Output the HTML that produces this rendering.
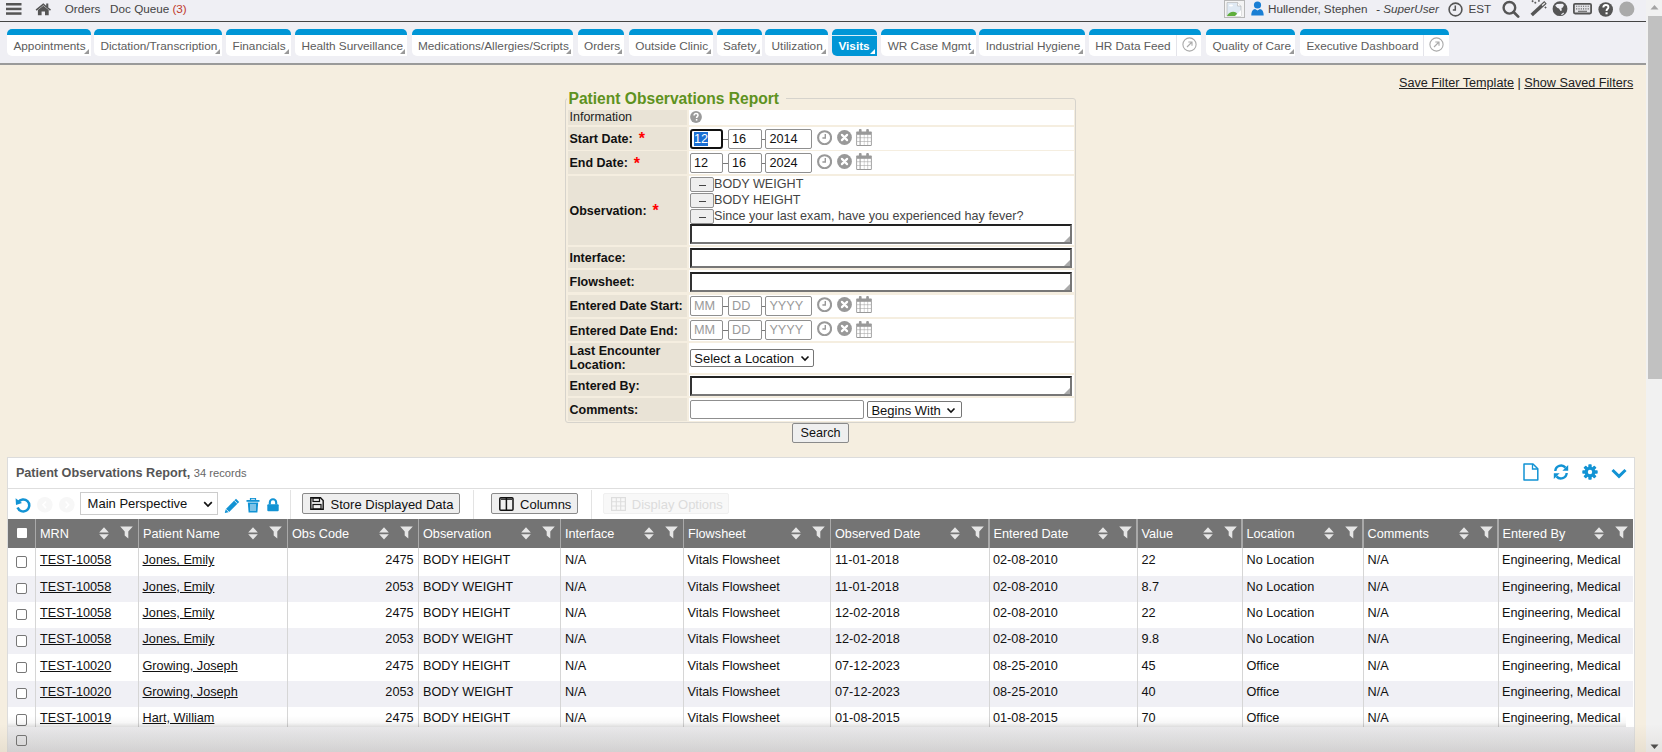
<!DOCTYPE html>
<html><head><meta charset="utf-8">
<style>
*{box-sizing:border-box;margin:0;padding:0}
html,body{width:1662px;height:752px;overflow:hidden}
body{position:relative;background:#f5eee0;font-family:"Liberation Sans",sans-serif;color:#222}
.abs{position:absolute}
#topbar{left:0;top:0;width:1646px;height:22px;background:#efeff4;border-bottom:1.4px solid #444}
#tabbar{left:0;top:22px;width:1646px;height:43px;background:#efeff4;border-bottom:2px solid #9a9a9a}
.tnav{font-size:11.7px;color:#444;top:1.9px;white-space:nowrap}
.tab{position:absolute;top:6.7px;height:27.6px;background:#fff;border-top:6px solid #0096d6;border-radius:5px 5px 0 5px;font-size:11.8px;color:#5c5c5c;white-space:nowrap;padding-left:6.4px;line-height:15px;padding-top:4.3px}
.tab .tri{position:absolute;width:0;height:0;border-left:5px solid transparent;border-bottom:5px solid #999;}
.tab.sel{background:#0096d6;color:#fff;font-weight:bold}
.tab .ext{position:absolute;top:0;right:0;bottom:0;border-left:1px solid #e4e4ea}
#sb{left:1646px;top:0;width:16px;height:752px;background:#f1f1f1}
#sbthumb{left:1648px;top:16px;width:14px;height:362.7px;background:#c1c1c1}

#fs{left:565px;top:98px;width:511px;height:325px;border:1px solid #d6d3cc;border-radius:3px}
#legend{left:566.5px;top:90px;padding:0 7px 0 2px;background:#f5eee0;font-size:15.6px;font-weight:bold;color:#5e9220;white-space:nowrap;line-height:18px}
.lc{position:absolute;left:568px;width:119px;background:#e9e3d6;font-size:12.5px;font-weight:bold;color:#111;white-space:nowrap}
.vc{position:absolute;left:689px;width:385px;background:#fff}
.lbl{position:absolute;left:1.5px;line-height:14px;margin-top:0.6px}
.req{color:#f00;margin-left:6px;font-size:16px;position:relative;top:1.5px}
.inp{position:absolute;background:#fff;border:1px solid #8f8f8f;border-radius:2px;font-size:12.7px;color:#111;line-height:15px;padding-left:3px;white-space:nowrap}
.ph{color:#9a9a9a}
.dash{position:absolute;height:1px;width:5px;background:#777}
.ta{position:absolute;left:690px;width:382px;height:20px;background:#fff;border-top:2px solid #222;border-left:2px solid #333;border-right:2px solid #777;border-bottom:2px solid #777}
.ta .grip{position:absolute;right:0;bottom:0;width:0;height:0;border-left:6px solid transparent;border-bottom:6px solid #aaa}
.minus{position:absolute;left:690px;width:23.5px;height:14.3px;background:#efefef;border:1px solid #8f8f8f;border-radius:2px}
.minus:after{content:"";position:absolute;left:7.5px;top:7px;width:7px;height:1px;background:#444}
.obs{position:absolute;left:714px;font-size:12.6px;color:#444;white-space:nowrap;line-height:14px}
.dd{position:absolute;background:#fff;border:1px solid #767676;border-radius:2px;font-size:13px;color:#111;white-space:nowrap;line-height:15px;padding-left:3px}
.dd svg{position:absolute;top:5px}
.btn{position:absolute;background:#efefef;border:1px solid #8a8a8a;border-radius:2px;font-size:12.6px;color:#111;text-align:center;line-height:18px}

#panel{left:7px;top:457px;width:1628px;height:300px;background:#fff;border:1px solid #dcdcdc}
#ptitle{left:15.9px;top:465.5px;font-size:12.66px;font-weight:bold;color:#555;white-space:nowrap;line-height:14px}
#ptitle span{font-weight:normal;font-size:11.15px;color:#666}
#pline{left:8px;top:487.6px;width:1626px;height:1px;background:#dedede}
.vsep{position:absolute;width:1px;background:#e3e3e3}
.tbtn{position:absolute;top:493.4px;height:20.2px;background:#efefef;border:1px solid #8a8a8a;border-radius:2px;font-size:13px;color:#111;white-space:nowrap;line-height:17px;padding-top:1.8px}
#ghead{left:8px;top:519px;width:1625px;height:29px;background:#747474}
.hc{position:absolute;top:519px;height:29px;color:#fff;font-size:12.7px;white-space:nowrap;line-height:14px;padding-top:7.8px}
.hsep{position:absolute;top:519px;height:29px;width:1.5px;background:#a9a9a9}
.bsep{position:absolute;top:548px;height:179px;width:1px;background:#d6d6d6}
.row{position:absolute;left:8px;width:1625px;height:26.4px}
.alt{background:#f0f0f5}
.c{position:absolute;font-size:12.7px;color:#111;white-space:nowrap;line-height:14px}
.u{text-decoration:underline}
.cb{position:absolute;left:16.3px;width:11.2px;height:11.4px;border:1px solid #777;border-radius:2px;background:#fff}
#footer{left:8px;top:727.3px;width:1626px;height:25px;background:linear-gradient(#e9e9eb,#dedee1)}
#shadow{left:8px;top:716px;width:1618px;height:11.3px;background:linear-gradient(rgba(0,0,0,0),rgba(0,0,0,0.03) 60%,rgba(0,0,0,0.13))}
</style></head><body>

<div id="topbar" class="abs">
<svg class="abs" style="left:6px;top:2.6px" width="16" height="13" viewBox="0 0 16 13"><rect x="0" y="0" width="15.5" height="2.5" fill="#555"/><rect x="0" y="4.7" width="15.5" height="2.5" fill="#555"/><rect x="0" y="9.3" width="15.5" height="2.5" fill="#555"/></svg>
<svg class="abs" style="left:35px;top:1.6px" width="17" height="14" viewBox="0 0 17 14"><path d="M8.3 1.2 L0.6 7.6 L1.6 8.8 L8.3 3.3 L15 8.8 L16 7.6 L13.3 5.4 V1.5 H11.2 V3.7Z" fill="#555"/><path d="M2.9 8.1 L8.3 3.8 L13.7 8.1 V13.2 H10 V9.6 H6.6 V13.2 H2.9Z" fill="#555"/></svg>
<span class="abs tnav" style="left:64.7px">Orders</span>
<span class="abs tnav" style="left:110.1px">Doc Queue <span style="color:#c0392b">(3)</span></span>
<svg class="abs" style="left:1224px;top:0px" width="21" height="18" viewBox="0 0 21 18"><rect x="0.5" y="0.5" width="20" height="17" fill="#f4f4f4" stroke="#b8b8b8"/><path d="M3 2.5 H13.5 L17 6 V16 H3Z" fill="#dfe9f3" stroke="#b0b0b0" stroke-width="0.6"/><path d="M13.5 2.5 V6 H17" fill="#fff" stroke="#b0b0b0" stroke-width="0.6"/><path d="M3 16 C5 12 9 11 12 12.5 L15 16Z" fill="#5fae3c"/><path d="M11 16 L17 10 V16Z" fill="#fff"/><ellipse cx="7" cy="5.5" rx="2" ry="1" fill="#fff"/></svg>
<svg class="abs" style="left:1250.5px;top:1px" width="13" height="15" viewBox="0 0 13 15"><circle cx="6.5" cy="4" r="3.6" fill="#1a7fd4"/><path d="M0.3 14.6 C0.3 9.5 2.5 8.3 4 8 L6.5 9.5 L9 8 C10.5 8.3 12.7 9.5 12.7 14.6Z" fill="#1a7fd4"/></svg>
<span class="abs tnav" style="left:1268px">Hullender, Stephen</span>
<span class="abs tnav" style="left:1376px;font-style:italic">- SuperUser</span>
<svg class="abs" style="left:1448px;top:1.5px" width="15" height="15" viewBox="0 0 15 15"><circle cx="7.5" cy="7.5" r="6.4" fill="none" stroke="#555" stroke-width="1.6"/><path d="M7.3 3.5 V8 H4.8" fill="none" stroke="#555" stroke-width="1.5"/></svg>
<span class="abs tnav" style="left:1468.5px">EST</span>
<svg class="abs" style="left:1500px;top:0px" width="20" height="19" viewBox="0 0 20 19"><circle cx="9.4" cy="7.8" r="5.8" fill="none" stroke="#555" stroke-width="2.4"/><path d="M13.6 12 L18.2 16.6" stroke="#555" stroke-width="2.7" stroke-linecap="round"/></svg>
<svg class="abs" style="left:1530px;top:0px" width="18" height="18" viewBox="0 0 18 18"><path d="M0.49 13.67 L2.91 16.33 L16.71 3.73 L14.29 1.07Z" fill="#555"/><path d="M11.65 5.11 L12.45 5.99 L15.21 3.47 L14.41 2.59Z" fill="#eee"/><path d="M2.6 0.2 V2.2 M1.6 1.2 H3.6 M8.9 0 V1.8 M8 0.9 H9.8 M5.3 1.7 V3.7 M4.3 2.7 H6.3 M15.5 6.5 V8.5 M14.5 7.5 H16.5" stroke="#555" stroke-width="0.9"/></svg>
<svg class="abs" style="left:1552px;top:1px" width="16" height="16" viewBox="0 0 16 16"><circle cx="8" cy="7.7" r="7.4" fill="#555"/><path d="M3.2 4.5 L5 3 L10.5 2.8 L12 4 L10.8 6.5 L9.5 7 L9.8 9.5 L8.5 10 L7 7.5 L5.5 7 L4 5.5Z" fill="#efeff4"/><path d="M8.8 13.5 L11.5 11.5 L12 12.8 L10 14Z" fill="#efeff4"/></svg>
<svg class="abs" style="left:1573px;top:3.4px" width="20" height="12" viewBox="0 0 20 12"><rect x="0.9" y="0.9" width="17.2" height="9.6" rx="1.2" fill="#e4e4e8" stroke="#555" stroke-width="1.8"/><path d="M3.2 3.3 H16 M3.2 5.9 H16" stroke="#555" stroke-width="1.1" stroke-dasharray="1 1.3"/><path d="M5 8.3 H14" stroke="#666" stroke-width="1.1"/></svg>
<svg class="abs" style="left:1597.5px;top:1.5px" width="16" height="15" viewBox="0 0 16 15"><circle cx="7.7" cy="7.5" r="7.3" fill="#555"/><path d="M5.3 5.6 C5.3 3.8 6.4 3 7.8 3 C9.4 3 10.4 4 10.4 5.3 C10.4 6.8 8.6 7.2 8.6 8.5 V9" fill="none" stroke="#fff" stroke-width="1.9"/><rect x="7.5" y="10.3" width="2.1" height="2" fill="#fff"/></svg>
<svg class="abs" style="left:1618.5px;top:1px" width="16" height="16" viewBox="0 0 16 16"><circle cx="7.8" cy="8" r="7.6" fill="#aaa"/></svg>
</div>
<div id="tabbar" class="abs">
<div class="tab" style="left:7.0px;width:83.7px">Appointments<span class="tri" style="right:1.8px;bottom:2.4px"></span></div>
<div class="tab" style="left:94.0px;width:127.8px">Dictation/Transcription<span class="tri" style="right:1.8px;bottom:2.4px"></span></div>
<div class="tab" style="left:226.1px;width:64.6px">Financials<span class="tri" style="right:1.8px;bottom:2.4px"></span></div>
<div class="tab" style="left:295.0px;width:111.9px">Health Surveillance<span class="tri" style="right:1.8px;bottom:2.4px"></span></div>
<div class="tab" style="left:411.6px;width:161.4px">Medications/Allergies/Scripts<span class="tri" style="right:1.8px;bottom:2.4px"></span></div>
<div class="tab" style="left:577.6px;width:46.7px">Orders<span class="tri" style="right:1.8px;bottom:2.4px"></span></div>
<div class="tab" style="left:628.9px;width:83.9px">Outside Clinic<span class="tri" style="right:1.8px;bottom:2.4px"></span></div>
<div class="tab" style="left:716.5px;width:45.3px">Safety<span class="tri" style="right:1.8px;bottom:2.4px"></span></div>
<div class="tab" style="left:765.2px;width:62.5px">Utilization<span class="tri" style="right:1.8px;bottom:2.4px"></span></div>
<div class="tab sel" style="left:832.0px;width:44.6px"><span style="position:absolute;left:0;right:0;top:0.3px;height:1px;background:#d8eef9"></span>Visits<span class="tri" style="right:1.8px;bottom:2.4px;border-bottom-color:#fff"></span></div>
<div class="tab" style="left:881.3px;width:94.3px">WR Case Mgmt<span class="tri" style="right:1.8px;bottom:2.4px"></span></div>
<div class="tab" style="left:979.4px;width:105.4px">Industrial Hygiene<span class="tri" style="right:1.8px;bottom:2.4px"></span></div>
<div class="tab" style="left:1088.9px;width:112.5px">HR Data Feed<span class="ext" style="width:25.1px"><svg style="position:absolute;left:4.6px;top:2.4px" width="15" height="15" viewBox="0 0 15 15"><circle cx="7.5" cy="7.5" r="6.6" fill="none" stroke="#aaa" stroke-width="1.1"/><path d="M5 10 L10 5 M6.3 5 H10 V8.7" fill="none" stroke="#aaa" stroke-width="1.1"/></svg></span></div>
<div class="tab" style="left:1206.0px;width:89.3px">Quality of Care<span class="tri" style="right:1.8px;bottom:2.4px"></span></div>
<div class="tab" style="left:1300.0px;width:149.0px">Executive Dashboard<span class="ext" style="width:25.7px"><svg style="position:absolute;left:4.6px;top:2.4px" width="15" height="15" viewBox="0 0 15 15"><circle cx="7.5" cy="7.5" r="6.6" fill="none" stroke="#aaa" stroke-width="1.1"/><path d="M5 10 L10 5 M6.3 5 H10 V8.7" fill="none" stroke="#aaa" stroke-width="1.1"/></svg></span></div>
</div>

<div id="fs" class="abs"></div>
<div id="legend" class="abs">Patient Observations Report</div>
<div class="lc" style="top:109.6px;height:15.3px"><span class="lbl" style="top:0.00px;font-weight:normal;font-size:12.5px;color:#222">Information</span></div>
<div class="vc" style="top:109.6px;height:15.3px"></div>
<div class="lc" style="top:126.9px;height:22.7px"><span class="lbl" style="top:3.10px;">Start Date:<span class="req">*</span></span></div>
<div class="vc" style="top:126.9px;height:22.7px"></div>
<div class="lc" style="top:151.3px;height:22.7px"><span class="lbl" style="top:3.30px;">End Date:<span class="req">*</span></span></div>
<div class="vc" style="top:151.3px;height:22.7px"></div>
<div class="lc" style="top:175.6px;height:69.2px"><span class="lbl" style="top:26.40px;">Observation:<span class="req">*</span></span></div>
<div class="vc" style="top:175.6px;height:69.2px"></div>
<div class="lc" style="top:247.2px;height:20.8px"><span class="lbl" style="top:3.4px;">Interface:</span></div>
<div class="vc" style="top:247.2px;height:20.8px"></div>
<div class="lc" style="top:270.3px;height:21.9px"><span class="lbl" style="top:3.9px;">Flowsheet:</span></div>
<div class="vc" style="top:270.3px;height:21.9px"></div>
<div class="lc" style="top:294.5px;height:22.7px"><span class="lbl" style="top:4.3px;">Entered Date Start:</span></div>
<div class="vc" style="top:294.5px;height:22.7px"></div>
<div class="lc" style="top:318.9px;height:22.1px"><span class="lbl" style="top:4.1px;">Entered Date End:</span></div>
<div class="vc" style="top:318.9px;height:22.1px"></div>
<div class="lc" style="top:343.2px;height:29.8px"><span class="lbl" style="top:1.5px;line-height:13.5px">Last Encounter<br>Location:</span></div>
<div class="vc" style="top:343.2px;height:29.8px"></div>
<div class="lc" style="top:374.7px;height:21.7px"><span class="lbl" style="top:3.8px;">Entered By:</span></div>
<div class="vc" style="top:374.7px;height:21.7px"></div>
<div class="lc" style="top:398.0px;height:22.8px"><span class="lbl" style="top:4.1px;">Comments:</span></div>
<div class="vc" style="top:398.0px;height:22.8px"></div>
<svg class="abs" style="left:689.8px;top:110.5px" width="12" height="12" viewBox="0 0 12 12"><circle cx="6" cy="6" r="5.9" fill="#9a9a9a"/><path d="M4.1 4.5 C4.1 3.2 5 2.6 6 2.6 C7.2 2.6 8 3.3 8 4.3 C8 5.5 6.6 5.7 6.6 6.8 V7.1" fill="none" stroke="#fff" stroke-width="1.5"/><rect x="5.8" y="8" width="1.6" height="1.6" fill="#fff"/></svg>
<div class="inp" style="left:690.0px;top:129.0px;width:33.3px;height:19.6px;padding-top:2.2px;border:2px solid #111;border-radius:3px;padding-left:2px;padding-top:1.2px"><span style="background:#1a6fd4;color:#fff">12</span></div>
<div class="inp" style="left:728.0px;top:129.0px;width:33.7px;height:19.6px;padding-top:2.2px">16</div>
<div class="inp" style="left:765.4px;top:129.0px;width:46.3px;height:19.6px;padding-top:2.2px">2014</div>
<div class="dash" style="left:723.3px;top:138.8px"></div>
<div class="dash" style="left:761.7px;top:138.8px;width:3.7px"></div>
<svg class="abs" style="left:817px;top:129.7px" width="15" height="15" viewBox="0 0 15 15"><circle cx="7.6" cy="7.7" r="6.5" fill="none" stroke="#999" stroke-width="2.1"/><path d="M8.3 4 V8 H5.4" fill="none" stroke="#999" stroke-width="1.4"/></svg>
<svg class="abs" style="left:837px;top:129.7px" width="15" height="15" viewBox="0 0 15 15"><circle cx="7.5" cy="7.5" r="7.4" fill="#999"/><path d="M4.9 4.9 L10.1 10.1 M10.1 4.9 L4.9 10.1" stroke="#fff" stroke-width="2.2" stroke-linecap="round"/></svg>
<svg class="abs" style="left:856px;top:129.3px" width="16" height="17" viewBox="0 0 16 17"><rect x="0.2" y="2.5" width="15.6" height="14.4" rx="0.8" fill="#999"/><rect x="1.1" y="5.80" width="2.5" height="2.80" fill="#fff"/><rect x="1.1" y="9.10" width="2.5" height="3.20" fill="#fff"/><rect x="1.1" y="12.70" width="2.5" height="3.30" fill="#fff"/><rect x="4.6" y="5.80" width="3.3" height="2.80" fill="#fff"/><rect x="4.6" y="9.10" width="3.3" height="3.20" fill="#fff"/><rect x="4.6" y="12.70" width="3.3" height="3.30" fill="#fff"/><rect x="8.3" y="5.80" width="3.3" height="2.80" fill="#fff"/><rect x="8.3" y="9.10" width="3.3" height="3.20" fill="#fff"/><rect x="8.3" y="12.70" width="3.3" height="3.30" fill="#fff"/><rect x="12.1" y="5.80" width="2.8" height="2.80" fill="#fff"/><rect x="12.1" y="9.10" width="2.8" height="3.20" fill="#fff"/><rect x="12.1" y="12.70" width="2.8" height="3.30" fill="#fff"/><rect x="2.9" y="0" width="2.7" height="4" rx="1" fill="#999"/><rect x="10.2" y="0" width="2.7" height="4" rx="1" fill="#999"/></svg>
<div class="inp" style="left:690.0px;top:153.0px;width:33.3px;height:19.6px;padding-top:2.2px">12</div>
<div class="inp" style="left:728.0px;top:153.0px;width:33.7px;height:19.6px;padding-top:2.2px">16</div>
<div class="inp" style="left:765.4px;top:153.0px;width:46.3px;height:19.6px;padding-top:2.2px">2024</div>
<div class="dash" style="left:723.3px;top:162.8px"></div>
<div class="dash" style="left:761.7px;top:162.8px;width:3.7px"></div>
<svg class="abs" style="left:817px;top:153.7px" width="15" height="15" viewBox="0 0 15 15"><circle cx="7.6" cy="7.7" r="6.5" fill="none" stroke="#999" stroke-width="2.1"/><path d="M8.3 4 V8 H5.4" fill="none" stroke="#999" stroke-width="1.4"/></svg>
<svg class="abs" style="left:837px;top:153.7px" width="15" height="15" viewBox="0 0 15 15"><circle cx="7.5" cy="7.5" r="7.4" fill="#999"/><path d="M4.9 4.9 L10.1 10.1 M10.1 4.9 L4.9 10.1" stroke="#fff" stroke-width="2.2" stroke-linecap="round"/></svg>
<svg class="abs" style="left:856px;top:153.3px" width="16" height="17" viewBox="0 0 16 17"><rect x="0.2" y="2.5" width="15.6" height="14.4" rx="0.8" fill="#999"/><rect x="1.1" y="5.80" width="2.5" height="2.80" fill="#fff"/><rect x="1.1" y="9.10" width="2.5" height="3.20" fill="#fff"/><rect x="1.1" y="12.70" width="2.5" height="3.30" fill="#fff"/><rect x="4.6" y="5.80" width="3.3" height="2.80" fill="#fff"/><rect x="4.6" y="9.10" width="3.3" height="3.20" fill="#fff"/><rect x="4.6" y="12.70" width="3.3" height="3.30" fill="#fff"/><rect x="8.3" y="5.80" width="3.3" height="2.80" fill="#fff"/><rect x="8.3" y="9.10" width="3.3" height="3.20" fill="#fff"/><rect x="8.3" y="12.70" width="3.3" height="3.30" fill="#fff"/><rect x="12.1" y="5.80" width="2.8" height="2.80" fill="#fff"/><rect x="12.1" y="9.10" width="2.8" height="3.20" fill="#fff"/><rect x="12.1" y="12.70" width="2.8" height="3.30" fill="#fff"/><rect x="2.9" y="0" width="2.7" height="4" rx="1" fill="#999"/><rect x="10.2" y="0" width="2.7" height="4" rx="1" fill="#999"/></svg>
<div class="minus" style="top:177.3px"></div>
<div class="obs" style="top:176.6px">BODY WEIGHT</div>
<div class="minus" style="top:193.3px"></div>
<div class="obs" style="top:192.6px">BODY HEIGHT</div>
<div class="minus" style="top:209.4px"></div>
<div class="obs" style="top:208.7px">Since your last exam, have you experienced hay fever?</div>
<div class="ta" style="top:224.0px"><span class="grip"></span></div>
<div class="ta" style="top:248.0px"><span class="grip"></span></div>
<div class="ta" style="top:272.0px"><span class="grip"></span></div>
<div class="ta" style="top:375.5px"><span class="grip"></span></div>
<div class="inp ph" style="left:690.0px;top:296.0px;width:33.3px;height:19.6px;padding-top:2.2px">MM</div>
<div class="inp ph" style="left:728.0px;top:296.0px;width:33.7px;height:19.6px;padding-top:2.2px">DD</div>
<div class="inp ph" style="left:765.4px;top:296.0px;width:46.3px;height:19.6px;padding-top:2.2px">YYYY</div>
<div class="dash" style="left:723.3px;top:305.8px"></div>
<div class="dash" style="left:761.7px;top:305.8px;width:3.7px"></div>
<svg class="abs" style="left:817px;top:296.7px" width="15" height="15" viewBox="0 0 15 15"><circle cx="7.6" cy="7.7" r="6.5" fill="none" stroke="#999" stroke-width="2.1"/><path d="M8.3 4 V8 H5.4" fill="none" stroke="#999" stroke-width="1.4"/></svg>
<svg class="abs" style="left:837px;top:296.7px" width="15" height="15" viewBox="0 0 15 15"><circle cx="7.5" cy="7.5" r="7.4" fill="#999"/><path d="M4.9 4.9 L10.1 10.1 M10.1 4.9 L4.9 10.1" stroke="#fff" stroke-width="2.2" stroke-linecap="round"/></svg>
<svg class="abs" style="left:856px;top:296.3px" width="16" height="17" viewBox="0 0 16 17"><rect x="0.2" y="2.5" width="15.6" height="14.4" rx="0.8" fill="#999"/><rect x="1.1" y="5.80" width="2.5" height="2.80" fill="#fff"/><rect x="1.1" y="9.10" width="2.5" height="3.20" fill="#fff"/><rect x="1.1" y="12.70" width="2.5" height="3.30" fill="#fff"/><rect x="4.6" y="5.80" width="3.3" height="2.80" fill="#fff"/><rect x="4.6" y="9.10" width="3.3" height="3.20" fill="#fff"/><rect x="4.6" y="12.70" width="3.3" height="3.30" fill="#fff"/><rect x="8.3" y="5.80" width="3.3" height="2.80" fill="#fff"/><rect x="8.3" y="9.10" width="3.3" height="3.20" fill="#fff"/><rect x="8.3" y="12.70" width="3.3" height="3.30" fill="#fff"/><rect x="12.1" y="5.80" width="2.8" height="2.80" fill="#fff"/><rect x="12.1" y="9.10" width="2.8" height="3.20" fill="#fff"/><rect x="12.1" y="12.70" width="2.8" height="3.30" fill="#fff"/><rect x="2.9" y="0" width="2.7" height="4" rx="1" fill="#999"/><rect x="10.2" y="0" width="2.7" height="4" rx="1" fill="#999"/></svg>
<div class="inp ph" style="left:690.0px;top:320.3px;width:33.3px;height:19.6px;padding-top:2.2px">MM</div>
<div class="inp ph" style="left:728.0px;top:320.3px;width:33.7px;height:19.6px;padding-top:2.2px">DD</div>
<div class="inp ph" style="left:765.4px;top:320.3px;width:46.3px;height:19.6px;padding-top:2.2px">YYYY</div>
<div class="dash" style="left:723.3px;top:330.1px"></div>
<div class="dash" style="left:761.7px;top:330.1px;width:3.7px"></div>
<svg class="abs" style="left:817px;top:321.0px" width="15" height="15" viewBox="0 0 15 15"><circle cx="7.6" cy="7.7" r="6.5" fill="none" stroke="#999" stroke-width="2.1"/><path d="M8.3 4 V8 H5.4" fill="none" stroke="#999" stroke-width="1.4"/></svg>
<svg class="abs" style="left:837px;top:321.0px" width="15" height="15" viewBox="0 0 15 15"><circle cx="7.5" cy="7.5" r="7.4" fill="#999"/><path d="M4.9 4.9 L10.1 10.1 M10.1 4.9 L4.9 10.1" stroke="#fff" stroke-width="2.2" stroke-linecap="round"/></svg>
<svg class="abs" style="left:856px;top:320.6px" width="16" height="17" viewBox="0 0 16 17"><rect x="0.2" y="2.5" width="15.6" height="14.4" rx="0.8" fill="#999"/><rect x="1.1" y="5.80" width="2.5" height="2.80" fill="#fff"/><rect x="1.1" y="9.10" width="2.5" height="3.20" fill="#fff"/><rect x="1.1" y="12.70" width="2.5" height="3.30" fill="#fff"/><rect x="4.6" y="5.80" width="3.3" height="2.80" fill="#fff"/><rect x="4.6" y="9.10" width="3.3" height="3.20" fill="#fff"/><rect x="4.6" y="12.70" width="3.3" height="3.30" fill="#fff"/><rect x="8.3" y="5.80" width="3.3" height="2.80" fill="#fff"/><rect x="8.3" y="9.10" width="3.3" height="3.20" fill="#fff"/><rect x="8.3" y="12.70" width="3.3" height="3.30" fill="#fff"/><rect x="12.1" y="5.80" width="2.8" height="2.80" fill="#fff"/><rect x="12.1" y="9.10" width="2.8" height="3.20" fill="#fff"/><rect x="12.1" y="12.70" width="2.8" height="3.30" fill="#fff"/><rect x="2.9" y="0" width="2.7" height="4" rx="1" fill="#999"/><rect x="10.2" y="0" width="2.7" height="4" rx="1" fill="#999"/></svg>
<div class="dd" style="left:690.3px;top:348.7px;width:124.2px;height:18px;padding-top:1px">Select a Location<svg style="left:109px" width="10" height="7" viewBox="0 0 10 7"><path d="M1.5 1.5 L5 5 L8.5 1.5" fill="none" stroke="#111" stroke-width="1.6"/></svg></div>
<div class="inp" style="left:690.3px;top:400px;width:173.3px;height:19.4px"></div>
<div class="dd" style="left:867.4px;top:401.4px;width:94.2px;height:17.1px;padding-top:0.5px">Begins With<svg style="left:78px" width="10" height="7" viewBox="0 0 10 7"><path d="M1.5 1.5 L5 5 L8.5 1.5" fill="none" stroke="#111" stroke-width="1.6"/></svg></div>
<div class="btn" style="left:792.3px;top:423px;width:56.5px;height:20px">Search</div>
<div class="abs" style="left:1399px;top:75.7px;font-size:12.65px;color:#222;white-space:nowrap"><span style="text-decoration:underline">Save Filter Template</span> | <span style="text-decoration:underline">Show Saved Filters</span></div>
<div id="panel" class="abs"></div>
<div id="ptitle" class="abs">Patient Observations Report, <span>34 records</span></div>
<svg class="abs" style="left:1523px;top:463px" width="16" height="18" viewBox="0 0 16 18"><path d="M1 1 H10 L14.8 5.8 V17 H1Z" fill="none" stroke="#1293d4" stroke-width="1.5" stroke-linejoin="round"/><path d="M9.5 1 V6 H14.8" fill="none" stroke="#1293d4" stroke-width="1.3"/></svg>
<svg class="abs" style="left:1552.5px;top:464px" width="16" height="16" viewBox="0 0 16 16"><path d="M2.3 7 A5.8 5.8 0 0 1 12.5 3.6" fill="none" stroke="#1293d4" stroke-width="2.4"/><path d="M15.2 1 V6.8 H9.4Z" fill="#1293d4"/><path d="M13.7 9 A5.8 5.8 0 0 1 3.5 12.4" fill="none" stroke="#1293d4" stroke-width="2.4"/><path d="M0.8 15 V9.2 H6.6Z" fill="#1293d4"/></svg>
<svg class="abs" style="left:1581.5px;top:464px" width="16" height="16" viewBox="0 0 16 16"><g fill="#1293d4"><circle cx="8" cy="8" r="5.3"/><rect x="6.3" y="0.3" width="3.4" height="15.4" rx="0.8"/><rect x="6.3" y="0.3" width="3.4" height="15.4" rx="0.8" transform="rotate(45 8 8)"/><rect x="6.3" y="0.3" width="3.4" height="15.4" rx="0.8" transform="rotate(90 8 8)"/><rect x="6.3" y="0.3" width="3.4" height="15.4" rx="0.8" transform="rotate(135 8 8)"/></g><circle cx="8" cy="8" r="2.2" fill="#fff"/></svg>
<svg class="abs" style="left:1611px;top:468px" width="16" height="11" viewBox="0 0 16 11"><path d="M1.5 2 L8 8.3 L14.5 2" fill="none" stroke="#1293d4" stroke-width="3"/></svg>
<div id="pline" class="abs"></div>
<svg class="abs" style="left:15px;top:496.5px" width="16" height="16" viewBox="0 0 16 16"><path d="M3.2 5.2 A6 6 0 1 1 2.6 10.5" fill="none" stroke="#1293d4" stroke-width="2.5"/><path d="M0.6 1.3 L1 8 L7 6Z" fill="#1293d4"/></svg>
<svg class="abs" style="left:36.6px;top:497px" width="16" height="16" viewBox="0 0 16 16"><circle cx="7.8" cy="7.8" r="7.8" fill="#f7f7f7"/><path d="M9 4.5 L6 7.8 L9 11.1" fill="none" stroke="#fff" stroke-width="1.6"/></svg>
<svg class="abs" style="left:58.5px;top:497px" width="16" height="16" viewBox="0 0 16 16"><circle cx="7.8" cy="7.8" r="7.8" fill="#f7f7f7"/><path d="M6.6 4.5 L9.6 7.8 L6.6 11.1" fill="none" stroke="#fff" stroke-width="1.6"/></svg>
<div class="abs" style="left:80.3px;top:492.3px;width:138px;height:22.5px;border:1px solid #ccc;background:#fff;font-size:13px;color:#111;line-height:15px;padding:3px 0 0 6.3px;white-space:nowrap">Main Perspective<svg style="position:absolute;left:122px;top:7.5px" width="10" height="7" viewBox="0 0 10 7"><path d="M1.2 1.2 L5 5 L8.8 1.2" fill="none" stroke="#111" stroke-width="1.7"/></svg></div>
<svg class="abs" style="left:224px;top:497.5px" width="16" height="16" viewBox="0 0 16 16"><path d="M12 0.8 L15.2 4 L5.2 14 L1.2 15 L0.8 14.6 L1.9 10.9Z" fill="#1293d4"/><path d="M10.3 2.5 L13.5 5.7 M2 11.2 L4.9 14.1" stroke="#fff" stroke-width="0.9"/></svg>
<svg class="abs" style="left:246.4px;top:497.5px" width="14" height="15" viewBox="0 0 14 15"><rect x="0.5" y="2" width="13" height="1.8" fill="#1293d4"/><rect x="4.5" y="0.3" width="5" height="2" fill="none" stroke="#1293d4" stroke-width="1.2"/><path d="M1.8 4.6 H12.2 L11.4 14.6 H2.6Z" fill="#1293d4"/><path d="M5 6 V13 M7 6 V13 M9 6 V13" stroke="#fff" stroke-width="0.9"/></svg>
<svg class="abs" style="left:266.7px;top:497.5px" width="12" height="14" viewBox="0 0 12 14"><path d="M2.8 6.5 V4.4 A3.2 3.2 0 0 1 9.2 4.4 V6.5" fill="none" stroke="#1293d4" stroke-width="2.1"/><rect x="0.3" y="6.2" width="11.4" height="7" rx="1" fill="#1293d4"/></svg>
<div class="vsep" style="left:290px;top:489.5px;height:29px"></div>
<div class="tbtn" style="left:302.4px;width:157.5px;padding-left:27.2px">Store Displayed Data<svg style="position:absolute;left:6.5px;top:3px" width="14" height="13" viewBox="0 0 14 13"><path d="M0.8 0.8 H10.5 L13.2 3.5 V12.2 H0.8Z" fill="none" stroke="#111" stroke-width="1.4"/><rect x="3" y="1" width="6.5" height="3.5" fill="none" stroke="#111" stroke-width="1.2"/><rect x="3" y="7.5" width="8" height="4.5" fill="none" stroke="#111" stroke-width="1.2"/></svg></div>
<div class="vsep" style="left:472.6px;top:489.5px;height:29px"></div>
<div class="tbtn" style="left:491.2px;width:87.1px;padding-left:27.9px">Columns<svg style="position:absolute;left:6.8px;top:3px" width="15" height="14" viewBox="0 0 15 14"><rect x="0.8" y="0.8" width="13.2" height="12.4" rx="1" fill="none" stroke="#111" stroke-width="1.5"/><path d="M7.4 1 V13" stroke="#111" stroke-width="1.5"/><path d="M2 2.2 H13" stroke="#111" stroke-width="1.2"/></svg></div>
<div class="vsep" style="left:591.1px;top:489.5px;height:29px"></div>
<div class="tbtn" style="left:603.2px;width:126.3px;padding-left:27.6px;background:#f8f8f8;border-color:#f0f0f0;color:#dcdcdc">Display Options<svg style="position:absolute;left:6.8px;top:3px" width="15" height="14" viewBox="0 0 15 14"><rect x="0.6" y="0.6" width="13.8" height="12.8" fill="none" stroke="#ddd" stroke-width="1.2"/><path d="M1 4.8 H14 M1 9 H14 M5.3 1 V13 M9.7 1 V13" stroke="#ddd" stroke-width="1.1"/></svg></div>
<div class="row" style="top:548.0px;height:27.5px"></div>
<div class="row alt" style="top:575.5px;height:26.3px"></div>
<div class="row" style="top:601.8px;height:26.3px"></div>
<div class="row alt" style="top:628.1px;height:26.3px"></div>
<div class="row" style="top:654.4px;height:26.3px"></div>
<div class="row alt" style="top:680.7px;height:26.3px"></div>
<div class="row" style="top:707.0px;height:26.3px"></div>
<div id="ghead" class="abs"></div>
<div class="abs" style="left:16.8px;top:528.1px;width:10.2px;height:10.1px;background:#fff;border-radius:1px"></div>
<div class="hsep" style="left:34.8px"></div>
<div class="bsep" style="left:35.0px"></div>
<div class="hc" style="left:40.0px">MRN</div>
<svg class="abs" style="left:99.1px;top:526.5px" width="10" height="13" viewBox="0 0 10 13"><path d="M0.2 5.5 L5 0.2 L9.8 5.5Z M0.2 7.2 L5 12.5 L9.8 7.2Z" fill="#e6e6e6"/></svg>
<svg class="abs" style="left:120.0px;top:526.3px" width="13" height="13" viewBox="0 0 13 13"><path d="M0.2 0.4 H12.8 L8.3 5.4 V12.4 L4.7 9.6 V5.4Z" fill="#e6e6e6"/></svg>
<div class="hsep" style="left:137.8px"></div>
<div class="bsep" style="left:138.0px"></div>
<div class="hc" style="left:143.0px">Patient Name</div>
<svg class="abs" style="left:248.1px;top:526.5px" width="10" height="13" viewBox="0 0 10 13"><path d="M0.2 5.5 L5 0.2 L9.8 5.5Z M0.2 7.2 L5 12.5 L9.8 7.2Z" fill="#e6e6e6"/></svg>
<svg class="abs" style="left:269.0px;top:526.3px" width="13" height="13" viewBox="0 0 13 13"><path d="M0.2 0.4 H12.8 L8.3 5.4 V12.4 L4.7 9.6 V5.4Z" fill="#e6e6e6"/></svg>
<div class="hsep" style="left:286.8px"></div>
<div class="bsep" style="left:287.0px"></div>
<div class="hc" style="left:292.0px">Obs Code</div>
<svg class="abs" style="left:379.1px;top:526.5px" width="10" height="13" viewBox="0 0 10 13"><path d="M0.2 5.5 L5 0.2 L9.8 5.5Z M0.2 7.2 L5 12.5 L9.8 7.2Z" fill="#e6e6e6"/></svg>
<svg class="abs" style="left:400.0px;top:526.3px" width="13" height="13" viewBox="0 0 13 13"><path d="M0.2 0.4 H12.8 L8.3 5.4 V12.4 L4.7 9.6 V5.4Z" fill="#e6e6e6"/></svg>
<div class="hsep" style="left:417.8px"></div>
<div class="bsep" style="left:418.0px"></div>
<div class="hc" style="left:423.0px">Observation</div>
<svg class="abs" style="left:521.1px;top:526.5px" width="10" height="13" viewBox="0 0 10 13"><path d="M0.2 5.5 L5 0.2 L9.8 5.5Z M0.2 7.2 L5 12.5 L9.8 7.2Z" fill="#e6e6e6"/></svg>
<svg class="abs" style="left:542.0px;top:526.3px" width="13" height="13" viewBox="0 0 13 13"><path d="M0.2 0.4 H12.8 L8.3 5.4 V12.4 L4.7 9.6 V5.4Z" fill="#e6e6e6"/></svg>
<div class="hsep" style="left:559.8px"></div>
<div class="bsep" style="left:560.0px"></div>
<div class="hc" style="left:565.0px">Interface</div>
<svg class="abs" style="left:644.1px;top:526.5px" width="10" height="13" viewBox="0 0 10 13"><path d="M0.2 5.5 L5 0.2 L9.8 5.5Z M0.2 7.2 L5 12.5 L9.8 7.2Z" fill="#e6e6e6"/></svg>
<svg class="abs" style="left:665.0px;top:526.3px" width="13" height="13" viewBox="0 0 13 13"><path d="M0.2 0.4 H12.8 L8.3 5.4 V12.4 L4.7 9.6 V5.4Z" fill="#e6e6e6"/></svg>
<div class="hsep" style="left:682.8px"></div>
<div class="bsep" style="left:683.0px"></div>
<div class="hc" style="left:688.0px">Flowsheet</div>
<svg class="abs" style="left:791.1px;top:526.5px" width="10" height="13" viewBox="0 0 10 13"><path d="M0.2 5.5 L5 0.2 L9.8 5.5Z M0.2 7.2 L5 12.5 L9.8 7.2Z" fill="#e6e6e6"/></svg>
<svg class="abs" style="left:812.0px;top:526.3px" width="13" height="13" viewBox="0 0 13 13"><path d="M0.2 0.4 H12.8 L8.3 5.4 V12.4 L4.7 9.6 V5.4Z" fill="#e6e6e6"/></svg>
<div class="hsep" style="left:829.8px"></div>
<div class="bsep" style="left:830.0px"></div>
<div class="hc" style="left:835.0px">Observed Date</div>
<svg class="abs" style="left:949.6px;top:526.5px" width="10" height="13" viewBox="0 0 10 13"><path d="M0.2 5.5 L5 0.2 L9.8 5.5Z M0.2 7.2 L5 12.5 L9.8 7.2Z" fill="#e6e6e6"/></svg>
<svg class="abs" style="left:970.5px;top:526.3px" width="13" height="13" viewBox="0 0 13 13"><path d="M0.2 0.4 H12.8 L8.3 5.4 V12.4 L4.7 9.6 V5.4Z" fill="#e6e6e6"/></svg>
<div class="hsep" style="left:988.3px"></div>
<div class="bsep" style="left:988.5px"></div>
<div class="hc" style="left:993.5px">Entered Date</div>
<svg class="abs" style="left:1097.6px;top:526.5px" width="10" height="13" viewBox="0 0 10 13"><path d="M0.2 5.5 L5 0.2 L9.8 5.5Z M0.2 7.2 L5 12.5 L9.8 7.2Z" fill="#e6e6e6"/></svg>
<svg class="abs" style="left:1118.5px;top:526.3px" width="13" height="13" viewBox="0 0 13 13"><path d="M0.2 0.4 H12.8 L8.3 5.4 V12.4 L4.7 9.6 V5.4Z" fill="#e6e6e6"/></svg>
<div class="hsep" style="left:1136.3px"></div>
<div class="bsep" style="left:1136.5px"></div>
<div class="hc" style="left:1141.5px">Value</div>
<svg class="abs" style="left:1202.6px;top:526.5px" width="10" height="13" viewBox="0 0 10 13"><path d="M0.2 5.5 L5 0.2 L9.8 5.5Z M0.2 7.2 L5 12.5 L9.8 7.2Z" fill="#e6e6e6"/></svg>
<svg class="abs" style="left:1223.5px;top:526.3px" width="13" height="13" viewBox="0 0 13 13"><path d="M0.2 0.4 H12.8 L8.3 5.4 V12.4 L4.7 9.6 V5.4Z" fill="#e6e6e6"/></svg>
<div class="hsep" style="left:1241.3px"></div>
<div class="bsep" style="left:1241.5px"></div>
<div class="hc" style="left:1246.5px">Location</div>
<svg class="abs" style="left:1323.6px;top:526.5px" width="10" height="13" viewBox="0 0 10 13"><path d="M0.2 5.5 L5 0.2 L9.8 5.5Z M0.2 7.2 L5 12.5 L9.8 7.2Z" fill="#e6e6e6"/></svg>
<svg class="abs" style="left:1344.5px;top:526.3px" width="13" height="13" viewBox="0 0 13 13"><path d="M0.2 0.4 H12.8 L8.3 5.4 V12.4 L4.7 9.6 V5.4Z" fill="#e6e6e6"/></svg>
<div class="hsep" style="left:1362.3px"></div>
<div class="bsep" style="left:1362.5px"></div>
<div class="hc" style="left:1367.5px">Comments</div>
<svg class="abs" style="left:1458.6px;top:526.5px" width="10" height="13" viewBox="0 0 10 13"><path d="M0.2 5.5 L5 0.2 L9.8 5.5Z M0.2 7.2 L5 12.5 L9.8 7.2Z" fill="#e6e6e6"/></svg>
<svg class="abs" style="left:1479.5px;top:526.3px" width="13" height="13" viewBox="0 0 13 13"><path d="M0.2 0.4 H12.8 L8.3 5.4 V12.4 L4.7 9.6 V5.4Z" fill="#e6e6e6"/></svg>
<div class="hsep" style="left:1497.3px"></div>
<div class="bsep" style="left:1497.5px"></div>
<div class="hc" style="left:1502.5px">Entered By</div>
<svg class="abs" style="left:1594.1px;top:526.5px" width="10" height="13" viewBox="0 0 10 13"><path d="M0.2 5.5 L5 0.2 L9.8 5.5Z M0.2 7.2 L5 12.5 L9.8 7.2Z" fill="#e6e6e6"/></svg>
<svg class="abs" style="left:1615.0px;top:526.3px" width="13" height="13" viewBox="0 0 13 13"><path d="M0.2 0.4 H12.8 L8.3 5.4 V12.4 L4.7 9.6 V5.4Z" fill="#e6e6e6"/></svg>
<div class="cb" style="top:556.4px"></div>
<div class="c u" style="left:40px;top:553.3px">TEST-10058</div>
<div class="c u" style="left:142.5px;top:553.3px">Jones, Emily</div>
<div class="c" style="left:288px;width:125.6px;text-align:right;top:553.3px">2475</div>
<div class="c" style="left:423px;top:553.3px">BODY HEIGHT</div>
<div class="c" style="left:565px;top:553.3px">N/A</div>
<div class="c" style="left:687.6px;top:553.3px">Vitals Flowsheet</div>
<div class="c" style="left:835px;top:553.3px">11-01-2018</div>
<div class="c" style="left:993px;top:553.3px">02-08-2010</div>
<div class="c" style="left:1141.5px;top:553.3px">22</div>
<div class="c" style="left:1246.5px;top:553.3px">No Location</div>
<div class="c" style="left:1367.5px;top:553.3px">N/A</div>
<div class="c" style="left:1502px;top:553.3px">Engineering, Medical</div>
<div class="cb" style="top:582.7px"></div>
<div class="c u" style="left:40px;top:579.6px">TEST-10058</div>
<div class="c u" style="left:142.5px;top:579.6px">Jones, Emily</div>
<div class="c" style="left:288px;width:125.6px;text-align:right;top:579.6px">2053</div>
<div class="c" style="left:423px;top:579.6px">BODY WEIGHT</div>
<div class="c" style="left:565px;top:579.6px">N/A</div>
<div class="c" style="left:687.6px;top:579.6px">Vitals Flowsheet</div>
<div class="c" style="left:835px;top:579.6px">11-01-2018</div>
<div class="c" style="left:993px;top:579.6px">02-08-2010</div>
<div class="c" style="left:1141.5px;top:579.6px">8.7</div>
<div class="c" style="left:1246.5px;top:579.6px">No Location</div>
<div class="c" style="left:1367.5px;top:579.6px">N/A</div>
<div class="c" style="left:1502px;top:579.6px">Engineering, Medical</div>
<div class="cb" style="top:609.0px"></div>
<div class="c u" style="left:40px;top:605.9px">TEST-10058</div>
<div class="c u" style="left:142.5px;top:605.9px">Jones, Emily</div>
<div class="c" style="left:288px;width:125.6px;text-align:right;top:605.9px">2475</div>
<div class="c" style="left:423px;top:605.9px">BODY HEIGHT</div>
<div class="c" style="left:565px;top:605.9px">N/A</div>
<div class="c" style="left:687.6px;top:605.9px">Vitals Flowsheet</div>
<div class="c" style="left:835px;top:605.9px">12-02-2018</div>
<div class="c" style="left:993px;top:605.9px">02-08-2010</div>
<div class="c" style="left:1141.5px;top:605.9px">22</div>
<div class="c" style="left:1246.5px;top:605.9px">No Location</div>
<div class="c" style="left:1367.5px;top:605.9px">N/A</div>
<div class="c" style="left:1502px;top:605.9px">Engineering, Medical</div>
<div class="cb" style="top:635.3px"></div>
<div class="c u" style="left:40px;top:632.2px">TEST-10058</div>
<div class="c u" style="left:142.5px;top:632.2px">Jones, Emily</div>
<div class="c" style="left:288px;width:125.6px;text-align:right;top:632.2px">2053</div>
<div class="c" style="left:423px;top:632.2px">BODY WEIGHT</div>
<div class="c" style="left:565px;top:632.2px">N/A</div>
<div class="c" style="left:687.6px;top:632.2px">Vitals Flowsheet</div>
<div class="c" style="left:835px;top:632.2px">12-02-2018</div>
<div class="c" style="left:993px;top:632.2px">02-08-2010</div>
<div class="c" style="left:1141.5px;top:632.2px">9.8</div>
<div class="c" style="left:1246.5px;top:632.2px">No Location</div>
<div class="c" style="left:1367.5px;top:632.2px">N/A</div>
<div class="c" style="left:1502px;top:632.2px">Engineering, Medical</div>
<div class="cb" style="top:661.6px"></div>
<div class="c u" style="left:40px;top:658.5px">TEST-10020</div>
<div class="c u" style="left:142.5px;top:658.5px">Growing, Joseph</div>
<div class="c" style="left:288px;width:125.6px;text-align:right;top:658.5px">2475</div>
<div class="c" style="left:423px;top:658.5px">BODY HEIGHT</div>
<div class="c" style="left:565px;top:658.5px">N/A</div>
<div class="c" style="left:687.6px;top:658.5px">Vitals Flowsheet</div>
<div class="c" style="left:835px;top:658.5px">07-12-2023</div>
<div class="c" style="left:993px;top:658.5px">08-25-2010</div>
<div class="c" style="left:1141.5px;top:658.5px">45</div>
<div class="c" style="left:1246.5px;top:658.5px">Office</div>
<div class="c" style="left:1367.5px;top:658.5px">N/A</div>
<div class="c" style="left:1502px;top:658.5px">Engineering, Medical</div>
<div class="cb" style="top:687.9px"></div>
<div class="c u" style="left:40px;top:684.8px">TEST-10020</div>
<div class="c u" style="left:142.5px;top:684.8px">Growing, Joseph</div>
<div class="c" style="left:288px;width:125.6px;text-align:right;top:684.8px">2053</div>
<div class="c" style="left:423px;top:684.8px">BODY WEIGHT</div>
<div class="c" style="left:565px;top:684.8px">N/A</div>
<div class="c" style="left:687.6px;top:684.8px">Vitals Flowsheet</div>
<div class="c" style="left:835px;top:684.8px">07-12-2023</div>
<div class="c" style="left:993px;top:684.8px">08-25-2010</div>
<div class="c" style="left:1141.5px;top:684.8px">40</div>
<div class="c" style="left:1246.5px;top:684.8px">Office</div>
<div class="c" style="left:1367.5px;top:684.8px">N/A</div>
<div class="c" style="left:1502px;top:684.8px">Engineering, Medical</div>
<div class="cb" style="top:714.2px"></div>
<div class="c u" style="left:40px;top:711.1px">TEST-10019</div>
<div class="c u" style="left:142.5px;top:711.1px">Hart, William</div>
<div class="c" style="left:288px;width:125.6px;text-align:right;top:711.1px">2475</div>
<div class="c" style="left:423px;top:711.1px">BODY HEIGHT</div>
<div class="c" style="left:565px;top:711.1px">N/A</div>
<div class="c" style="left:687.6px;top:711.1px">Vitals Flowsheet</div>
<div class="c" style="left:835px;top:711.1px">01-08-2015</div>
<div class="c" style="left:993px;top:711.1px">01-08-2015</div>
<div class="c" style="left:1141.5px;top:711.1px">70</div>
<div class="c" style="left:1246.5px;top:711.1px">Office</div>
<div class="c" style="left:1367.5px;top:711.1px">N/A</div>
<div class="c" style="left:1502px;top:711.1px">Engineering, Medical</div>
<div id="shadow" class="abs"></div>
<div id="footer" class="abs"><div class="cb" style="left:8.3px;top:7.6px;background:transparent"></div></div>
<div id="sb" class="abs"></div>
<div id="sbthumb" class="abs"></div>
<svg class="abs" style="left:1650px;top:4px" width="9" height="6" viewBox="0 0 9 6"><path d="M0.5 5.5 L4.5 1 L8.5 5.5Z" fill="#a3a3a3"/></svg>
<svg class="abs" style="left:1650px;top:744px" width="9" height="6" viewBox="0 0 9 6"><path d="M0.5 0.5 L4.5 5 L8.5 0.5Z" fill="#505050"/></svg>

<div class="abs" style="left:0;top:724px;width:1662px;height:28px;background:linear-gradient(rgba(60,40,0,0),rgba(60,40,0,0.07));pointer-events:none"></div>
</body></html>
